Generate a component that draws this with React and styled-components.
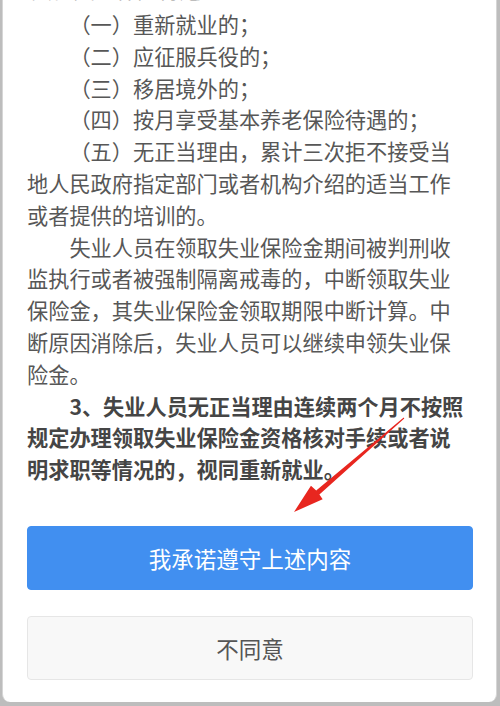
import styled, { createGlobalStyle } from "styled-components";

const GlobalStyle = createGlobalStyle`
  html, body {
    margin: 0;
    padding: 0;
    background: #bdbdbd;
  }
  body {
    font-family: "Noto Sans CJK SC", "Noto Sans", sans-serif;
  }
`;

const Page = styled.div`
  width: 500px;
  height: 706px;
  overflow: hidden;
  display: flex;
  justify-content: center;
`;

const Card = styled.div`
  position: relative;
  width: 495px;
  height: 702px;
  margin-left: -1px;
  background: #ffffff;
  border-left: 1px solid #d6d6d6;
  border-right: 1px solid #d6d6d6;
  border-radius: 0 0 8px 8px;
  overflow: hidden;
  box-sizing: border-box;
  padding: 8px 24px 0 24px;
  display: flex;
  flex-direction: column;
`;

const Article = styled.div`
  width: 440px;
  color: #575757;
  font-size: 21.2px;
  line-height: 31.8px;
`;

const Para = styled.p`
  margin: 0;
  text-indent: 2em;
  font-weight: ${(p) => (p.$bold ? 700 : 400)};
  color: ${(p) => (p.$bold ? "#454545" : "#575757")};
`;

/* the tail of the previous paragraph, scrolled almost out of view */
const CutPara = styled(Para)`
  margin-top: -35.3px;
  margin-bottom: 3.5px;
  text-indent: 0.2em;
  color: #8a8a8a;
`;

const Actions = styled.div`
  margin-top: 41px;
  display: flex;
  flex-direction: column;
  gap: 26px;
`;

const Button = styled.button`
  width: 446px;
  height: 64px;
  border-radius: 4px;
  font-family: "Noto Sans CJK SC", sans-serif;
  font-size: 22.5px;
  cursor: pointer;
  border: 1px solid ${(p) => (p.$primary ? "#418ff0" : "#e6e6e6")};
  background: ${(p) => (p.$primary ? "#418ff0" : "#f8f8f8")};
  color: ${(p) => (p.$primary ? "#ffffff" : "#555555")};
`;

const Overlay = styled.svg`
  position: absolute;
  left: 0;
  top: 0;
  pointer-events: none;
`;

const Arrow = () => (
  <Overlay width="495" height="702" viewBox="0 0 495 702">
    <polygon
      fill="#e8261f"
      points="401.3,418.4 400.7,417.6 313.2,490.6 307.95,485.7 291,512 319.65,499.3 316.4,494.4"
    />
  </Overlay>
);

export default function App() {
  return (
    <Page>
      <GlobalStyle />
      <Card>
        <Article>
          <CutPara>其他失业保险待遇：</CutPara>
          <Para>（一）重新就业的；</Para>
          <Para>（二）应征服兵役的；</Para>
          <Para>（三）移居境外的；</Para>
          <Para>（四）按月享受基本养老保险待遇的；</Para>
          <Para>
            （五）无正当理由，累计三次拒不接受当地人民政府指定部门或者机构介绍的适当工作或者提供的培训的。
          </Para>
          <Para>
            失业人员在领取失业保险金期间被判刑收监执行或者被强制隔离戒毒的，中断领取失业保险金，其失业保险金领取期限中断计算。中断原因消除后，失业人员可以继续申领失业保险金。
          </Para>
          <Para $bold>
            3、失业人员无正当理由连续两个月不按照规定办理领取失业保险金资格核对手续或者说明求职等情况的，视同重新就业。
          </Para>
        </Article>
        <Actions>
          <Button $primary>我承诺遵守上述内容</Button>
          <Button>不同意</Button>
        </Actions>
        <Arrow />
      </Card>
    </Page>
  );
}
